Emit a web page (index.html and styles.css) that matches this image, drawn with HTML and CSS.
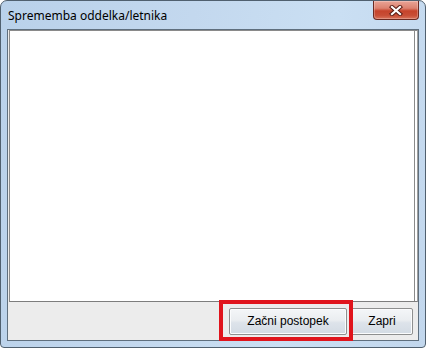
FILE: index.html
```html
<!DOCTYPE html>
<html>
<head>
<meta charset="utf-8">
<link rel="stylesheet" href="styles.css">
</head>
<body>
<div class="window">
  <div class="titlebar">
    <span class="title">Sprememba oddelka/letnika</span>
    <div class="close">
      <svg width="14" height="11" viewBox="0 0 14 11">
        <path d="M3 2 L11 9 M11 2 L3 9" stroke="#5a1c14" stroke-width="4.2" stroke-linecap="square" fill="none"/>
        <path d="M3 2 L11 9 M11 2 L3 9" stroke="#ffffff" stroke-width="2.2" stroke-linecap="square" fill="none"/>
      </svg>
    </div>
  </div>
  <div class="client">
    <div class="listbox"></div>
    <div class="buttonbar">
      <div class="highlight">
        <button class="btn btn-start">Začni postopek</button>
      </div>
      <button class="btn btn-close">Zapri</button>
    </div>
  </div>
</div>
</body>
</html>
```

FILE: styles.css
```css
html, body {
  margin: 0;
  padding: 0;
  background: #ffffff;
}
.window {
  box-sizing: border-box;
  width: 426px;
  height: 348px;
  border: 1px solid #50606f;
  border-radius: 7px 7px 4px 4px;
  background: linear-gradient(100deg, #b9d1ea 0%, #c3d8ee 40%, #cadff3 70%, #c2d7ed 100%);
  display: flex;
  flex-direction: column;
  overflow: hidden;
  font-family: "Liberation Sans", Arial, sans-serif;
}
.titlebar {
  height: 28px;
  display: flex;
  align-items: flex-start;
  padding-left: 7px;
  padding-right: 6px;
}
.title {
  font-family: "Noto Sans", "Open Sans", sans-serif;
  font-size: 12px;
  color: #000;
  margin-top: 6px;
}
.close {
  margin-left: auto;
  width: 46px;
  height: 19px;
  box-sizing: border-box;
  border: 1px solid #6b2a22;
  border-top: none;
  border-radius: 0 0 4px 4px;
  background: linear-gradient(#e9a496 0%, #dc8270 40%, #c6432b 55%, #c84e36 80%, #d9735b 100%);
  display: flex;
  align-items: center;
  justify-content: center;
  box-shadow: inset 0 0 0 1px rgba(255,255,255,0.25);
}
.close svg {
  display: block;
  margin-top: 1px;
}
.client {
  flex: 1;
  margin: 0 6px 6px 6px;
  border: 1px solid #5f6f7e;
  background: #ececec;
  display: flex;
  flex-direction: column;
}
.listbox {
  flex: 1;
  background: #ffffff;
  border-top: 1px solid #8a8a8a;
  border-left: 1px solid #8a8a8a;
  border-bottom: 1px solid #7d7d7d;
  border-right: 1px solid #a0a0a0;
  box-shadow: inset -2px 0 0 #ffffff, inset -3px 0 0 #8a8a8a;
  margin-left: 1px;
}
.buttonbar {
  height: 38px;
  display: flex;
  align-items: center;
  justify-content: flex-end;
  padding-right: 5px;
  gap: 4px;
}
.highlight {
  position: relative;
  display: flex;
}
.highlight::after {
  content: "";
  position: absolute;
  top: -8px;
  left: -10px;
  right: -6px;
  bottom: -6px;
  border: 4px solid #e0141c;
  pointer-events: none;
}
.btn {
  font-family: "Liberation Sans", Arial, sans-serif;
  font-size: 12px;
  color: #000;
  height: 27px;
  box-sizing: border-box;
  border: 1px solid #8e8f8f;
  border-radius: 2px;
  background: linear-gradient(#f4f6f8 0%, #eaedf0 45%, #dde3ea 55%, #d3dbe4 100%);
  box-shadow: inset 0 0 0 1px #fbfcfd;
  padding: 0;
  margin: 0;
}
.btn-start {
  width: 118px;
}
.btn-close {
  width: 62px;
}
```
